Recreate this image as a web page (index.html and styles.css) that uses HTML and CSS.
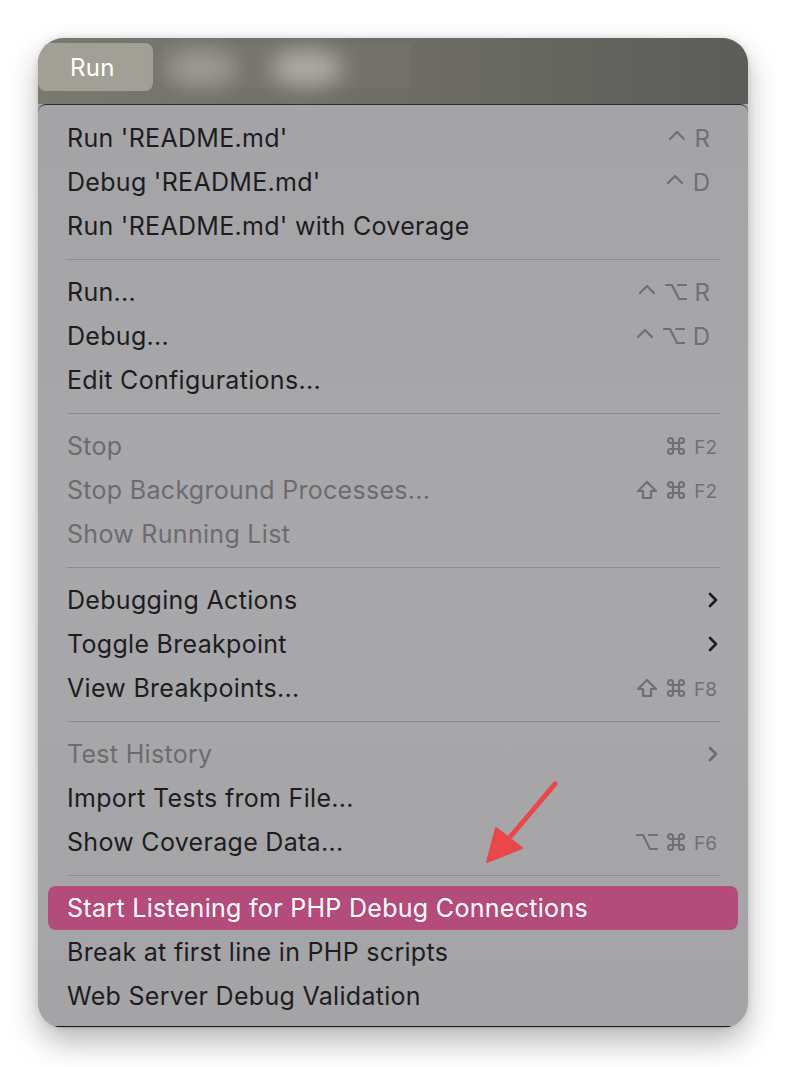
FILE: index.html
```html
<!DOCTYPE html>
<html>
<head>
<meta charset="utf-8">
<link rel="stylesheet" href="styles.css">
</head>
<body>
<svg width="0" height="0" class="defs">
  <defs>
    <symbol id="ctrl" viewBox="0 0 20 20"><path d="M3 11 L10 4 L17 11"/></symbol>
    <symbol id="opt" viewBox="0 0 22 20"><path d="M1 3 H7 L14 17 H21 M13 3 H21"/></symbol>
    <symbol id="shift" viewBox="0 0 22 20"><path d="M11 2 L2 11 H7 V18 H15 V11 H20 Z"/></symbol>
    <symbol id="cmd" viewBox="0 0 20 20"><path d="M7 7 H13 V13 H7 Z M7 7 V4.5 A2.5 2.5 0 1 0 4.5 7 H7 M13 7 V4.5 A2.5 2.5 0 1 1 15.5 7 H13 M7 13 V15.5 A2.5 2.5 0 1 1 4.5 13 H7 M13 13 V15.5 A2.5 2.5 0 1 0 15.5 13 H13"/></symbol>
    <symbol id="chev" viewBox="0 0 10 16"><path d="M2 2 L8 8 L2 14"/></symbol>
  </defs>
</svg>
<div class="window">
  <div class="topbar">
    <div class="run-btn">Run</div>
    <div class="blurbox"></div>
    <div class="blur b1"></div>
    <div class="blur b2"></div>
  </div>
  <div class="menu">
    <div class="row"><span>Run 'README.md'</span><span class="sc"><svg class="k"><use href="#ctrl"/></svg><span>R</span></span></div>
    <div class="row"><span>Debug 'README.md'</span><span class="sc"><svg class="k"><use href="#ctrl"/></svg><span>D</span></span></div>
    <div class="row"><span>Run 'README.md' with Coverage</span></div>
    <div class="sep"></div>
    <div class="row"><span>Run...</span><span class="sc"><svg class="k"><use href="#ctrl"/></svg><svg class="k w"><use href="#opt"/></svg><span>R</span></span></div>
    <div class="row"><span>Debug...</span><span class="sc"><svg class="k"><use href="#ctrl"/></svg><svg class="k w"><use href="#opt"/></svg><span>D</span></span></div>
    <div class="row"><span>Edit Configurations...</span></div>
    <div class="sep"></div>
    <div class="row dis"><span>Stop</span><span class="sc fk"><svg class="k"><use href="#cmd"/></svg><span class="fn">F2</span></span></div>
    <div class="row dis"><span>Stop Background Processes...</span><span class="sc fk"><svg class="k w"><use href="#shift"/></svg><svg class="k"><use href="#cmd"/></svg><span class="fn">F2</span></span></div>
    <div class="row dis"><span>Show Running List</span></div>
    <div class="sep"></div>
    <div class="row chev-row"><span>Debugging Actions</span><svg class="chev"><use href="#chev"/></svg></div>
    <div class="row chev-row"><span>Toggle Breakpoint</span><svg class="chev"><use href="#chev"/></svg></div>
    <div class="row"><span>View Breakpoints...</span><span class="sc fk"><svg class="k w"><use href="#shift"/></svg><svg class="k"><use href="#cmd"/></svg><span class="fn">F8</span></span></div>
    <div class="sep"></div>
    <div class="row dis chev-row"><span>Test History</span><svg class="chev"><use href="#chev"/></svg></div>
    <div class="row"><span>Import Tests from File...</span></div>
    <div class="row"><span>Show Coverage Data...</span><span class="sc fk"><svg class="k w"><use href="#opt"/></svg><svg class="k"><use href="#cmd"/></svg><span class="fn">F6</span></span></div>
    <div class="sep"></div>
    <div class="row hl"><span>Start Listening for PHP Debug Connections</span></div>
    <div class="row"><span>Break at first line in PHP scripts</span></div>
    <div class="row"><span>Web Server Debug Validation</span></div>
  </div>
  <svg class="arrow" viewBox="0 0 100 100" width="100" height="100">
    <path d="M80 4 L36 56" stroke="#e9474a" stroke-width="5" stroke-linecap="round"/>
    <path d="M12 82 L21 48 L47 68 Z" fill="#e9474a" stroke="#e9474a" stroke-width="2" stroke-linejoin="round"/>
  </svg>
</div>
</body>
</html>
```
FILE: styles.css
```css
html, body {
  margin: 0;
  padding: 0;
  background: #ffffff;
}
body {
  width: 786px;
  height: 1067px;
  font-family: "Inter", "Noto Sans", sans-serif;
}
.defs { position: absolute; }
.window {
  position: relative;
  margin: 38px 0 0 38px;
  width: 710px;
  height: 990px;
  border-radius: 26px;
  overflow: hidden;
  box-shadow: 0 14px 30px rgba(0,0,0,0.28), 0 0 6px rgba(0,0,0,0.12);
  background: #a6a6a9;
}
.topbar {
  height: 66px;
  background: linear-gradient(90deg, #7a7970 0%, #6e6d66 50%, #5c5c59 100%);
  display: flex;
  align-items: flex-start;
  padding-top: 5px;
  box-sizing: border-box;
  position: relative;
}
.run-btn {
  width: 115px;
  height: 48px;
  background: #a19f96;
  border-radius: 0 8px 8px 8px;
  color: #ffffff;
  font-size: 24px;
  letter-spacing: 0.3px;
  display: flex;
  align-items: center;
  padding-left: 32px;
  box-sizing: border-box;
}
.blurbox {
  position: absolute;
  left: 125px;
  top: 5px;
  width: 248px;
  height: 45px;
  background: rgba(130,129,122,0.22);
  filter: blur(1px);
}
.blur {
  position: absolute;
  top: 12px;
  height: 36px;
  border-radius: 50%;
  background: #a3a29b;
  filter: blur(11px);
  opacity: 0.85;
}
.b1 { left: 128px; width: 72px; }
.b2 { left: 233px; width: 72px; background: #b8b7b1; }
.menu {
  border-top: 1px solid #2c2c2c;
  border-radius: 8px 8px 0 0;
  background: linear-gradient(180deg, #a4a4a7 0%, #a8a8ab 50%, #a4a4a7 100%);
  padding: 11px 0 10px;
  height: 923px;
  box-sizing: border-box;
  border-bottom: 1px solid #1c1c1c;
}
.row {
  height: 44px;
  display: flex;
  align-items: center;
  justify-content: space-between;
  padding: 0 38px 0 29px;
  font-size: 25px;
  letter-spacing: 0.3px;
  color: #1d1d1f;
}
.row.dis { color: #6c6c70; }
.sc {
  display: flex;
  align-items: center;
  gap: 8px;
  color: #707074;
  font-size: 24px;
  letter-spacing: 0;
}
.sc.fk { margin-right: -7px; }
.fn { font-size: 19px; padding-top: 2px; }
.k {
  width: 20px;
  height: 20px;
  fill: none;
  stroke: #707074;
  stroke-width: 2.2;
  stroke-linecap: round;
  stroke-linejoin: round;
}
.k.w { width: 22px; }
.chev-row { padding-right: 30px; }
.chev {
  width: 10px;
  height: 16px;
  fill: none;
  stroke: #1d1d1f;
  stroke-width: 2.6;
  stroke-linecap: round;
  stroke-linejoin: round;
}
.dis .chev { stroke: #6c6c70; }
.sep {
  height: 1px;
  margin: 11px 28px 10px 29px;
  background: #8d8d91;
}
.row.hl {
  margin: 0 10px;
  padding-left: 19px;
  background: #b34b7b;
  border-radius: 8px;
  color: #ffffff;
}
.arrow {
  position: absolute;
  left: 437px;
  top: 742px;
}
```
